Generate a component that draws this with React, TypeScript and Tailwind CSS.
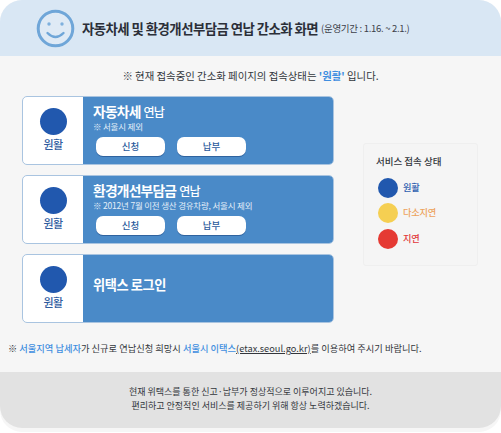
const font = '[font-family:"Noto_Sans_CJK_KR","Liberation_Sans",sans-serif]';

function StatusCell() {
  return (
    <div className="flex w-[60px] shrink-0 flex-col items-center pt-[11px]">
      <div className="h-[27px] w-[27px] rounded-full bg-[#2158ae]" />
      <div className="mt-[1px] text-[11px] leading-[16px] font-medium tracking-[-0.5px] text-[#2f5c9f]">원활</div>
    </div>
  );
}

function PayButton({ label }: { label: string }) {
  return (
    <button className="h-[19px] w-[69px] rounded-[7px] bg-white text-[9.5px] leading-[19px] font-medium text-[#2a5a9c] shadow-[0_1px_0_#2f639f]">
      {label}
    </button>
  );
}

function ServiceRow({ title, sub, note }: { title: string; sub: string; note: string }) {
  return (
    <div className="flex h-[69px] overflow-hidden rounded-[5px] border border-[#a9c4e0] bg-white">
      <StatusCell />
      <div className="flex-1 bg-[#4a8ac8] pt-[6px] pl-[10px] text-white">
        <div className="flex items-baseline gap-[3px] leading-[17px] tracking-[-0.8px]">
          <span className="text-[13.8px] font-bold">{title}</span>
          <span className="text-[12px] font-medium">{sub}</span>
        </div>
        <div className="mt-[1px] text-[8.5px] leading-[11px] tracking-[-0.2px] text-[#e3eef8]">{note}</div>
        <div className="mt-[5px] ml-[3px] flex gap-[12px]">
          <PayButton label="신청" />
          <PayButton label="납부" />
        </div>
      </div>
    </div>
  );
}

function LegendItem({ color, text, label }: { color: string; text: string; label: string }) {
  return (
    <div className="flex h-[25.5px] items-center gap-[5px]">
      <div className={`h-[20px] w-[20px] rounded-full ${color}`} />
      <span className={`text-[9.2px] font-medium tracking-[-0.2px] ${text}`}>{label}</span>
    </div>
  );
}

export default function App() {
  return (
    <div className={`h-[433px] w-[501px] overflow-hidden bg-white ${font}`}>
      <div className="h-[432px] overflow-hidden rounded-[22px] bg-[#f6f6f6]">
        <div className="flex h-[56px] items-center bg-[#d9e7f4] pl-[36px]">
          <svg width="39" height="39" viewBox="0 0 39 39" className="shrink-0">
            <circle cx="19.5" cy="19.5" r="17.3" fill="#dfeaf5" stroke="#6fa6d8" strokeWidth="3" />
            <circle cx="13" cy="15" r="1.7" fill="#7fb0dd" />
            <circle cx="26" cy="15" r="1.7" fill="#7fb0dd" />
            <path d="M11.5 24 Q19.5 32 27.5 24" fill="none" stroke="#6fa6d8" strokeWidth="2.4" strokeLinecap="round" />
          </svg>
          <span className="ml-[7px] text-[13.4px] font-bold tracking-[-0.55px] whitespace-nowrap text-[#2b2f38]">
            자동차세 및 환경개선부담금 연납 간소화 화면
          </span>
          <span className="ml-[3px] text-[9.5px] tracking-[-0.3px] whitespace-nowrap text-[#3c4048]">
            (운영기간 : 1.16. ~ 2.1.)
          </span>
        </div>

        <div className="mt-[12px] text-center text-[10.4px] leading-[16px] text-[#33363c]">
          ※ 현재 접속중인 간소화 페이지의 접속상태는 <span className="font-bold text-[#3f8ee0]">'원활'</span> 입니다.
        </div>

        <div className="mt-[12px] flex pl-[22px]">
          <div className="flex w-[312px] flex-col gap-[10px]">
            <ServiceRow title="자동차세" sub="연납" note="※ 서울시 제외" />
            <ServiceRow title="환경개선부담금" sub="연납" note="※ 2012년 7월 이전 생산 경유차량, 서울시 제외" />
            <div className="flex h-[69px] overflow-hidden rounded-[5px] border border-[#a9c4e0] bg-white">
              <StatusCell />
              <div className="flex flex-1 items-center bg-[#4a8ac8] pb-[8px] pl-[10px] text-[13.2px] font-bold tracking-[-0.4px] text-white">
                위택스 로그인
              </div>
            </div>
          </div>
          <div className="mt-[47px] ml-[29px] h-[123px] w-[115px] rounded-[3px] border border-[#efefef] bg-[#f5f5f5] pt-[9px] pl-[12px]">
            <div className="mb-[6px] text-[9.5px] leading-[16px] font-medium text-[#33363c]">서비스 접속 상태</div>
            <div className="pl-[2px]">
              <LegendItem color="bg-[#2158ae]" text="text-[#2f5fb0]" label="원활" />
              <LegendItem color="bg-[#f5cf52]" text="text-[#eda35c]" label="다소지연" />
              <LegendItem color="bg-[#e53a33]" text="text-[#e2393a]" label="지연" />
            </div>
          </div>
        </div>

        <div className="mt-[17px] pl-[8px] text-[9.25px] leading-[16px] whitespace-nowrap text-[#33363c]">
          ※ <span className="font-medium text-[#3f8ee0]">서울지역 납세자</span>가 신규로 연납신청 희망시{" "}
          <span className="font-medium text-[#3f8ee0]">서울시 이택스</span>
          <span className="underline">(etax.seoul.go.kr)</span>를 이용하여 주시기 바랍니다.
        </div>

        <div className="mt-[16px] flex h-[56px] flex-col justify-center rounded-b-[22px] bg-[#e2e2e2] pb-[2px] text-center text-[9px] leading-[14.5px] text-[#33363c]">
          <div>현재 위택스를 통한 신고·납부가 정상적으로 이루어지고 있습니다.</div>
          <div>편리하고 안정적인 서비스를 제공하기 위해 항상 노력하겠습니다.</div>
        </div>
      </div>
    </div>
  );
}
